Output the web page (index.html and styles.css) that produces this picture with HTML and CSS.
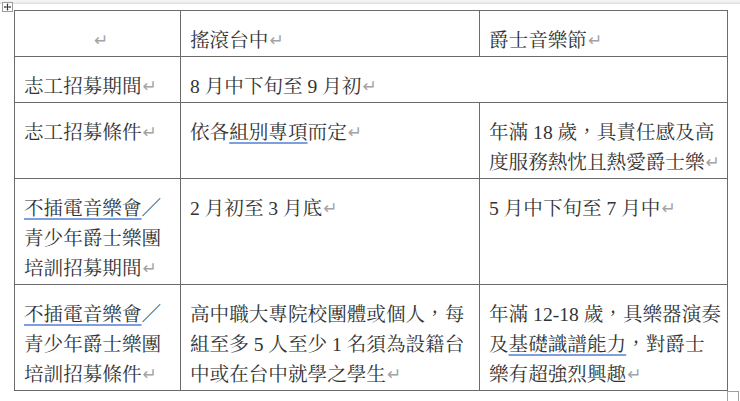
FILE: index.html
```html
<!DOCTYPE html>
<html lang="zh-Hant">
<head>
<meta charset="utf-8">
<title>志工招募</title>
<link rel="stylesheet" href="styles.css">
</head>
<body>
<div class="page">
  <div class="topband"></div>
  <div class="handle">
    <svg width="11" height="10" viewBox="0 0 11 10">
      <rect x="0.5" y="0.5" width="10" height="9" fill="#fff" stroke="#9a9a9a"/>
      <path d="M5.5 1.8V8.2M2.3 5H8.7" stroke="#333" stroke-width="1"/>
      <path d="M5.5 1.5L4.3 2.8H6.7Z M5.5 8.5L4.3 7.2H6.7Z M2 5L3.3 3.8V6.2Z M9 5L7.7 3.8V6.2Z" fill="#333"/>
    </svg>
  </div>
  <table class="grid">
    <colgroup>
      <col class="c1"><col class="c2"><col class="c3">
    </colgroup>
    <tr>
      <td class="center"><span class="pm">↵</span></td>
      <td>搖滾台中<span class="pm">↵</span></td>
      <td>爵士音樂節<span class="pm">↵</span></td>
    </tr>
    <tr>
      <td>志工招募期間<span class="pm">↵</span></td>
      <td colspan="2">8 月中下旬至 9 月初<span class="pm">↵</span></td>
    </tr>
    <tr>
      <td>志工招募條件<span class="pm">↵</span></td>
      <td>依各<span class="gram">組別專項</span>而定<span class="pm">↵</span></td>
      <td>年滿 18 歲，具責任感及高<br>度服務熱忱且熱愛爵士樂<span class="pm">↵</span></td>
    </tr>
    <tr>
      <td><span class="gram">不插電音樂會</span>／<br>青少年爵士樂團<br>培訓招募期間<span class="pm">↵</span></td>
      <td>2 月初至 3 月底<span class="pm">↵</span></td>
      <td>5 月中下旬至 7 月中<span class="pm">↵</span></td>
    </tr>
    <tr>
      <td><span class="gram">不插電音樂會</span>／<br>青少年爵士樂團<br>培訓招募條件<span class="pm">↵</span></td>
      <td>高中職大專院校團體或個人，每<br>組至多 5 人至少 1 名須為設籍台<br>中或在台中就學之學生<span class="pm">↵</span></td>
      <td>年滿 12-18 歲，具樂器演奏<br>及<span class="gram">基礎識譜能力</span>，對爵士<br>樂有超強烈興趣<span class="pm">↵</span></td>
    </tr>
  </table>
  <div class="resize"></div>
</div>
</body>
</html>
```

FILE: styles.css
```css
html, body {
  margin: 0;
  padding: 0;
  background: #ffffff;
}

.page {
  position: relative;
  width: 740px;
  height: 401px;
  overflow: hidden;
}

.topband {
  height: 3px;
  background: linear-gradient(#f7f7f7, #ebebeb);
  border-bottom: 1px solid #dedede;
}

.handle {
  position: absolute;
  left: 2px;
  top: 2px;
  width: 11px;
  height: 10px;
  line-height: 0;
}

.grid {
  margin: 6px 0 0 14px;
  border-collapse: collapse;
  table-layout: fixed;
  width: 713px;
  font-family: "Liberation Serif", "Noto Serif CJK TC", "Noto Sans CJK TC", serif;
  font-size: 19.6px;
  line-height: 30px;
  color: #333333;
}

.c1 { width: 166px; }
.c2 { width: 299px; }
.c3 { width: 248px; }

.grid td {
  border: 1px solid #6b6b6b;
  padding: 15px 0 0 9px;
  vertical-align: top;
  white-space: nowrap;
}

.grid td.center {
  text-align: center;
  padding-left: 6px;
}

.pm {
  font-family: "DejaVu Sans", sans-serif;
  font-size: 17px;
  color: #a3a3a3;
  margin-left: 1px;
  position: relative;
  top: -1px;
}

.gram {
  text-decoration: underline;
  text-decoration-color: #7f9ee0;
  text-decoration-thickness: 2px;
  text-underline-offset: 3px;
}

.resize {
  position: absolute;
  left: 727px;
  top: 391px;
  width: 10px;
  height: 12px;
  border: 1px solid #a0a0a0;
  background: #fff;
}
```
